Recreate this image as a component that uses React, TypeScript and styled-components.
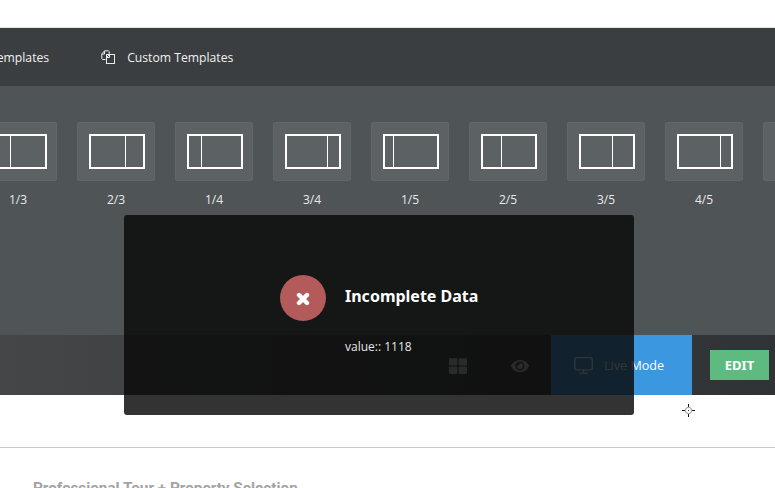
import styled, { createGlobalStyle } from "styled-components";
import { FaEye, FaThLarge } from "react-icons/fa";
import { FiMonitor } from "react-icons/fi";

const GlobalStyle = createGlobalStyle`
  html, body {
    margin: 0;
    padding: 0;
    background: #fff;
    overflow: hidden;
  }
  body {
    font-family: "Open Sans", "Noto Sans", sans-serif;
  }
`;

const Page = styled.div`
  position: relative;
  width: 775px;
  height: 488px;
  overflow: hidden;
`;

const TopGap = styled.div`
  height: 27px;
  border-bottom: 1px solid #e4e4e4;
`;

const Toolbar = styled.div`
  height: 58px;
  display: flex;
  align-items: center;
  background: #3b3e40;
  color: #f0f1f1;
  font-size: 12.2px;
  margin-left: -10px;
`;

const Tab = styled.div`
  display: flex;
  align-items: center;
  gap: 12px;
  margin-right: 52px;
`;

const TemplatePanel = styled.div`
  height: 249px;
  box-sizing: border-box;
  padding: 36px 0 0 0;
  background: #4f5457;
  overflow: hidden;
`;

const LayoutStrip = styled.div`
  display: flex;
  gap: 20px;
  margin-left: -21px;
`;

const LayoutItem = styled.div`
  flex: none;
  width: 78px;
  display: flex;
  flex-direction: column;
  align-items: center;
`;

const Tile = styled.div`
  width: 78px;
  height: 59px;
  box-sizing: border-box;
  padding-left: 2px;
  border: 1px solid #62676a;
  border-radius: 2px;
  background: #5c6164;
  display: flex;
  align-items: center;
  justify-content: center;
`;

const Frame = styled.div<{ $split: number }>`
  width: 56px;
  height: 35px;
  box-sizing: border-box;
  border: 2px solid #fff;
  display: grid;
  grid-template-columns: ${(p) => p.$split}px 1fr;
`;

const FrameCell = styled.div`
  border-right: 1px solid #fff;
`;

const LayoutLabel = styled.div`
  margin-top: 10px;
  font-size: 12px;
  line-height: 17px;
  color: #e8eaea;
`;

const BottomBar = styled.div`
  height: 60px;
  display: flex;
  align-items: center;
  justify-content: flex-end;
  background: linear-gradient(90deg, #444648 0%, #303335 100%);
`;

const BarIcon = styled.div`
  width: 62px;
  padding-top: 2px;
  display: flex;
  justify-content: center;
  color: #c4c6c7;
  font-size: 18px;
`;

const LiveButton = styled.div`
  width: 141px;
  height: 60px;
  box-sizing: border-box;
  padding-left: 22px;
  display: flex;
  align-items: center;
  gap: 10px;
  background: #3b97e0;
  color: #fff;
  font-size: 12.6px;
`;

const EditButton = styled.div`
  width: 59px;
  height: 30px;
  margin: 0 6px 0 18px;
  display: flex;
  align-items: center;
  justify-content: center;
  background: #5dbb7f;
  color: #fff;
  font-family: "Noto Sans", sans-serif;
  font-size: 13px;
  font-weight: 700;
`;

const Section = styled.div`
  height: 93px;
  box-sizing: border-box;
  padding-top: 52px;
`;

const Divider = styled.div`
  height: 1px;
  background: #a6d3f5;
`;

const SectionTitle = styled.h3`
  margin: 30px 0 0 33px;
  font-family: "Roboto", sans-serif;
  font-size: 15.3px;
  font-weight: 700;
  line-height: 20px;
  color: #a3a3a3;
`;

const Modal = styled.div`
  position: absolute;
  left: 124px;
  top: 215px;
  width: 510px;
  height: 200px;
  box-sizing: border-box;
  padding: 60px 0 0 156px;
  display: flex;
  gap: 19px;
  border-radius: 3px;
  background: rgba(10, 10, 10, 0.83);
  color: #fff;
`;

const ErrorBadge = styled.div`
  flex: none;
  width: 46px;
  height: 46px;
  padding-top: 2px;
  box-sizing: border-box;
  border-radius: 50%;
  background: #b35a5a;
  display: flex;
  align-items: center;
  justify-content: center;
`;

const ModalBody = styled.div`
  display: flex;
  flex-direction: column;
`;

const ModalTitle = styled.div`
  font-family: "Noto Sans", sans-serif;
  font-size: 16px;
  font-weight: 700;
  line-height: 22px;
  margin-top: 10px;
`;

const ModalText = styled.div`
  margin-top: 31px;
  font-size: 12px;
  line-height: 17px;
  color: #e6e6e6;
`;

const Cursor = styled.svg`
  position: absolute;
  left: 682px;
  top: 404px;
`;

const layouts = [
  { label: "1/3", split: 18 },
  { label: "2/3", split: 35 },
  { label: "1/4", split: 13 },
  { label: "3/4", split: 41 },
  { label: "1/5", split: 9 },
  { label: "2/5", split: 19 },
  { label: "3/5", split: 32 },
  { label: "4/5", split: 42 },
  { label: "", split: 8 },
];

const CloneIcon = () => (
  <svg width="14" height="14" viewBox="0 0 14 14" fill="none" stroke="#e8e9e9" strokeWidth="1">
    <path d="M4.5 9.5H1.5L0.8 8.8V4L3.5 0.8H7.5L8.2 1.5V4" />
    <path d="M3.5 1V4H1" />
    <rect x="5.5" y="4.5" width="8" height="9" />
    <path d="M5.5 7.5L8.5 4.5V7.5Z" />
  </svg>
);

const CrossIcon = () => (
  <svg width="14" height="14" viewBox="0 0 14 14" fill="none" stroke="#fff" strokeWidth="4.4" strokeLinecap="round">
    <path d="M3 3L11 11M11 3L3 11" />
  </svg>
);

const App = () => {
  return (
    <Page>
      <GlobalStyle />
      <TopGap />
      <Toolbar>
        <Tab>Templates</Tab>
        <Tab>
          <CloneIcon />
          Custom Templates
        </Tab>
      </Toolbar>
      <TemplatePanel>
        <LayoutStrip>
          {layouts.map((l, i) => (
            <LayoutItem key={i}>
              <Tile>
                <Frame $split={l.split}>
                  <FrameCell />
                </Frame>
              </Tile>
              <LayoutLabel>{l.label}</LayoutLabel>
            </LayoutItem>
          ))}
        </LayoutStrip>
      </TemplatePanel>
      <BottomBar>
        <BarIcon>
          <FaThLarge />
        </BarIcon>
        <BarIcon>
          <FaEye />
        </BarIcon>
        <LiveButton>
          <FiMonitor size={21} strokeWidth={1.6} />
          Live Mode
        </LiveButton>
        <EditButton>EDIT</EditButton>
      </BottomBar>
      <Section>
        <Divider />
        <SectionTitle>Professional Tour + Property Selection</SectionTitle>
      </Section>
      <Modal>
        <ErrorBadge>
          <CrossIcon />
        </ErrorBadge>
        <ModalBody>
          <ModalTitle>Incomplete Data</ModalTitle>
          <ModalText>value:: 1118</ModalText>
        </ModalBody>
      </Modal>
      <Cursor width="13" height="13" viewBox="0 0 13 13" fill="none">
        <path d="M6.5 0V3M6.5 10V13M0 6.5H3M10 6.5H13" stroke="#111" strokeWidth="1" />
        <circle cx="6.5" cy="6.5" r="3.2" stroke="#777" strokeWidth="0.8" />
        <rect x="6" y="6" width="1" height="1" fill="#333" />
      </Cursor>
    </Page>
  );
};

export default App;
